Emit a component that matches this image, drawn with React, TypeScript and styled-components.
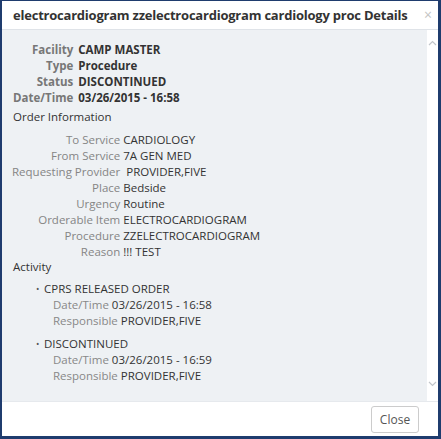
import React from "react";
import styled, { createGlobalStyle } from "styled-components";

const Global = createGlobalStyle`
html, body {
  margin: 0;
  padding: 0;
  height: 100%;
  background: #1f3c6e;
}
#root {
  height: 100%;
}
`;

const Frame = styled.div`
box-sizing: border-box;
height: 439px;
width: 441px;
border-style: solid;
border-color: #1f3c6e;
border-width: 1px 3px 3px 2px;
display: flex;
flex-direction: column;
background: #fff;
font-family: "Open Sans", "Liberation Sans", sans-serif;
color: #333;
`;

const Header = styled.div`
height: 28px;
flex: 0 0 28px;
display: flex;
align-items: center;
justify-content: space-between;
padding: 0 6px 0 11px;
border-bottom: 1px solid #dfe3e8;
`;

const Title = styled.div`
font-size: 13px;
font-weight: 700;
color: #333;
letter-spacing: -0.22px;
white-space: nowrap;
`;

const X = styled.div`
font-size: 14px;
color: #c4c4c4;
line-height: 1;
`;

const Body = styled.div`
flex: 1;
display: flex;
min-height: 0;
`;

const Content = styled.div`
flex: 1;
background: #eef1f4;
padding: 12px 0 0 11px;
font-size: 11.5px;
line-height: 16px;
`;

const Scroll = styled.div`
width: 11px;
flex: 0 0 11px;
display: flex;
flex-direction: column;
justify-content: space-between;
align-items: center;
padding: 10px 0 14px;
`;

const Grid = styled.div<{ $gap: number; $shift?: number }>`
display: grid;
grid-template-columns: auto 1fr;
column-gap: ${({ $gap }) => $gap}px;
margin-left: ${({ $shift }) => $shift || 0}px;
`;

const Label = styled.div<{ $bold?: boolean }>`
text-align: right;
color: ${({ $bold }) => ($bold ? "#777" : "#858585")};
font-weight: ${({ $bold }) => ($bold ? 700 : 400)};
`;

const Value = styled.div<{ $bold?: boolean; $indent?: number }>`
color: #333;
font-weight: ${({ $bold }) => ($bold ? 700 : 400)};
padding-left: ${({ $indent }) => $indent || 0}px;
`;

const Heading = styled.div<{ $top: number; $bottom: number }>`
color: #333;
margin: ${({ $top, $bottom }) => `${$top}px 0 ${$bottom}px`};
`;

const Activity = styled.ul`
margin: 6px 0 0;
padding: 0 0 0 31px;
list-style: none;
`;

const Entry = styled.li`
position: relative;
margin-bottom: 7px;
&::before {
  content: "•";
  position: absolute;
  left: -8px;
  color: #555;
  font-size: 9px;
}
`;

const Sub = styled.div`
padding-left: 9px;
color: #333;
`;

const SubLabel = styled.span`
color: #888;
`;

const Footer = styled.div`
flex: 0 0 34px;
display: flex;
align-items: center;
justify-content: flex-end;
padding-right: 19px;
border-top: 1px solid #e6e9ed;
`;

const Button = styled.button`
font-family: inherit;
font-size: 12px;
color: #555;
background: #fff;
border: 1px solid #ccc;
border-radius: 3px;
height: 27px;
width: 48px;
padding: 0;
`;

const Chevron = ({ up }: { up?: boolean }) => (
  <svg width="9" height="6" viewBox="0 0 9 6">
    <path
      d={up ? "M1 5 L4.5 1.5 L8 5" : "M1 1 L4.5 4.5 L8 1"}
      fill="none"
      stroke="#c2c6cb"
      strokeWidth="1.2"
    />
  </svg>
);

const summary: [string, string][] = [
  ["Facility", "CAMP MASTER"],
  ["Type", "Procedure"],
  ["Status", "DISCONTINUED"],
  ["Date/Time", "03/26/2015 - 16:58"],
];

const order: [string, string][] = [
  ["To Service", "CARDIOLOGY"],
  ["From Service", "7A GEN MED"],
  ["Requesting Provider", "PROVIDER,FIVE"],
  ["Place", "Bedside"],
  ["Urgency", "Routine"],
  ["Orderable Item", "ELECTROCARDIOGRAM"],
  ["Procedure", "ZZELECTROCARDIOGRAM"],
  ["Reason", "!!! TEST"],
];

const activity = [
  { what: "CPRS RELEASED ORDER", when: "03/26/2015 - 16:58", who: "PROVIDER,FIVE" },
  { what: "DISCONTINUED", when: "03/26/2015 - 16:59", who: "PROVIDER,FIVE" },
];

export default function App() {
  return (
    <>
      <Global />
      <Frame>
        <Header>
          <Title>electrocardiogram zzelectrocardiogram cardiology proc Details</Title>
          <X>×</X>
        </Header>
        <Body>
          <Content>
            <Grid $gap={5}>
              {summary.map(([l, v]) => (
                <React.Fragment key={l}>
                  <Label $bold>{l}</Label>
                  <Value $bold>{v}</Value>
                </React.Fragment>
              ))}
            </Grid>
            <Heading $top={3} $bottom={7}>Order Information</Heading>
            <Grid $gap={3} $shift={-1}>
              {order.map(([l, v]) => (
                <React.Fragment key={l}>
                  <Label>{l}</Label>
                  <Value $indent={l === "Requesting Provider" ? 3 : 0}>{v}</Value>
                </React.Fragment>
              ))}
            </Grid>
            <Heading $top={-1} $bottom={0}>Activity</Heading>
            <Activity>
              {activity.map((a) => (
                <Entry key={a.what}>
                  <div>{a.what}</div>
                  <Sub>
                    <SubLabel>Date/Time</SubLabel> {a.when}
                  </Sub>
                  <Sub>
                    <SubLabel>Responsible</SubLabel> {a.who}
                  </Sub>
                </Entry>
              ))}
            </Activity>
          </Content>
          <Scroll>
            <Chevron up />
            <Chevron />
          </Scroll>
        </Body>
        <Footer>
          <Button>Close</Button>
        </Footer>
      </Frame>
    </>
  );
}
